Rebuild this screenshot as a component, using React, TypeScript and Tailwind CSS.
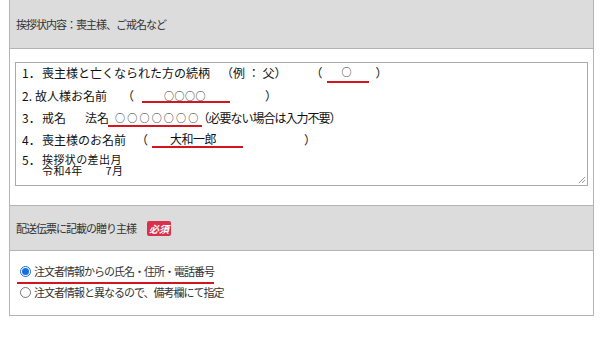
import React from 'react';

const jp = { fontFamily: '"Noto Sans CJK JP", "Noto Sans", sans-serif' };

function RedLine({ x, y, w }: { x: number; y: number; w: number }) {
  // red marker lines drawn over the form (annotation)
  return <span className="absolute h-[2px] bg-[#d3151d]" style={{ left: x, top: y, width: w }} />;
}

function Radio({ checked }: { checked?: boolean }) {
  return checked ? (
    <span className="w-[11px] h-[11px] rounded-full border border-[#1a6fe0] bg-white flex items-center justify-center shrink-0">
      <span className="w-[7px] h-[7px] rounded-full bg-[#1a6fe0]" />
    </span>
  ) : (
    <span className="w-[11px] h-[11px] rounded-full border border-[#767676] bg-white shrink-0" />
  );
}

export default function App() {
  return (
    <div className="w-[600px] h-[355px] bg-white text-[#333]" style={jp}>
      <div className="ml-[9px] w-[585px] border-x border-b border-[#b4b4b4]">
        <div className="h-[49px] bg-[#dcdcdc] border-b border-[#b4b4b4] flex items-center pl-[6px] text-[11px] tracking-[-1px]">
          挨拶状内容：喪主様、ご戒名など
        </div>
        <div className="pt-[13px] pb-[19px] px-[5px]">
          <div className="relative h-[124px] border border-[#a9a9a9] text-[12px] text-[#111] pl-[6px] whitespace-pre">
            <div className="flex items-center h-[20px]">
              <span className="w-[20px] shrink-0">1．</span>
              <span>喪主様と亡くなられた方の続柄</span>
              <span className="ml-[11px]">（例 ： 父）</span>
              <span className="ml-[24px]">（</span>
              <span className="ml-[19px] text-[10px] -translate-y-[2px]">○</span>
              <span className="ml-[24px]">）</span>
            </div>
            <div className="flex items-center h-[26px]">
              <span className="w-[13px] shrink-0">2.</span>
              <span>故人様お名前</span>
              <span className="ml-[15px]">（</span>
              <span className="ml-[30px] text-[10px] tracking-[0.5px] -translate-y-[1px]">○○○○</span>
              <span className="ml-[59px]">）</span>
            </div>
            <div className="flex items-center h-[18px]">
              <span className="w-[20px] shrink-0">3．</span>
              <span>戒名</span>
              <span className="ml-[19px]">法名</span>
              <span className="ml-[6px] text-[10px] tracking-[2.2px] -translate-y-[1px]">○○○○○○○</span>
              <span className="-ml-[3px] tracking-[-1px]">（必要ない場合は入力不要）</span>
            </div>
            <div className="flex items-center h-[26px]">
              <span className="w-[20px] shrink-0">4．</span>
              <span>喪主様のお名前</span>
              <span className="ml-[10px]">（</span>
              <span className="ml-[22px] tracking-[-0.5px] -translate-y-[1px]">大和一郎</span>
              <span className="ml-[88px]">）</span>
            </div>
            <div className="flex leading-[11px] text-[11px] pt-[1px]">
              <span className="w-[20px] shrink-0 text-[12px]">5．</span>
              <span className="tracking-[0.4px]">{'挨拶状の差出月\n令和4年　　7月'}</span>
            </div>
            <svg className="absolute right-[1px] bottom-[1px]" width="9" height="9" viewBox="0 0 9 9">
              <path d="M8 2 L2 8 M8 5 L5 8" stroke="#9a9a9a" strokeWidth="1" />
            </svg>
            <RedLine x={311} y={18} w={42} />
            <RedLine x={126} y={38} w={88} />
            <RedLine x={92} y={62} w={94} />
            <RedLine x={136} y={83} w={91} />
          </div>
        </div>
        <div className="h-[46px] bg-[#dcdcdc] border-y border-[#b4b4b4] flex items-center pl-[6px] text-[11px] gap-[11px]">
          <span className="tracking-[-1px]">配送伝票に記載の贈り主様</span>
          <span className="bg-[#d9304c] text-white text-[10px] h-[15px] leading-[15px] px-[2px] rounded-[2px] italic font-bold">必須</span>
        </div>
        <div className="relative pt-[10px] pb-[12px] pl-[10px] text-[11px] leading-[21px] tracking-[-1px]">
          <div className="flex items-center gap-[3px]">
            <Radio checked />
            <span>注文者情報からの氏名・住所・電話番号</span>
          </div>
          <div className="flex items-center gap-[3px]">
            <Radio />
            <span>注文者情報と異なるので、備考欄にて指定</span>
          </div>
          <RedLine x={7} y={31} w={197} />
        </div>
      </div>
    </div>
  );
}
